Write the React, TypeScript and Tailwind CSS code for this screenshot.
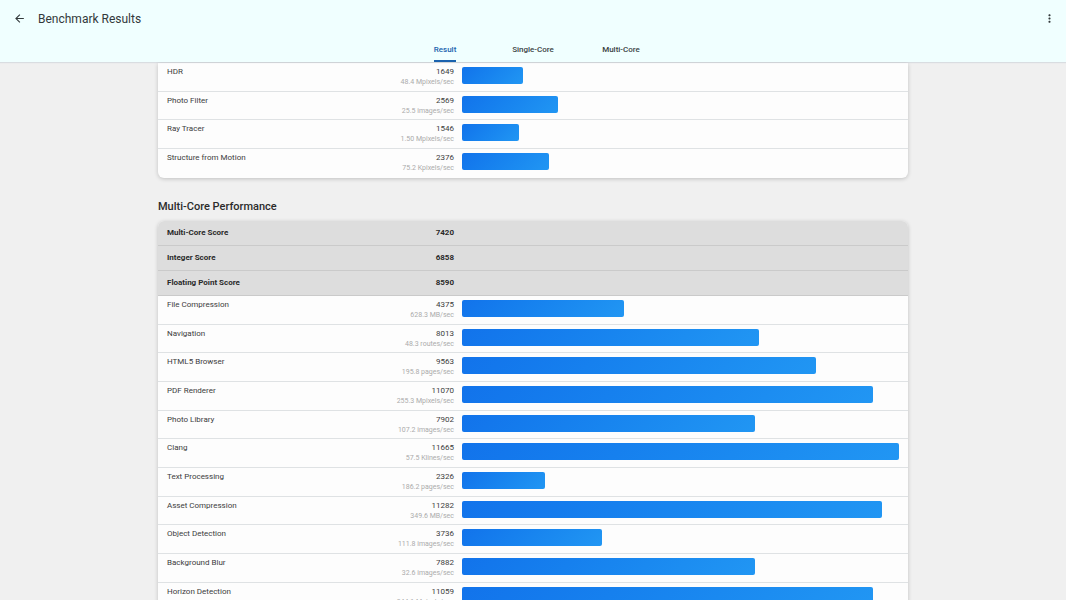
import clsx from 'clsx'
import { useState } from 'react'
import { MdArrowBack, MdMoreVert } from 'react-icons/md'

// ─── Types ────────────────────────────────────────────────────────────────────

interface Workload {
  name: string
  score: number
  rate: string
}

interface Summary {
  name: string
  score: number
}

// ─── Data ─────────────────────────────────────────────────────────────────────

const TABS = ['Result', 'Single-Core', 'Multi-Core']

const SINGLE_CORE: Workload[] = [
  { name: 'HDR', score: 1649, rate: '48.4 Mpixels/sec' },
  { name: 'Photo Filter', score: 2569, rate: '25.5 images/sec' },
  { name: 'Ray Tracer', score: 1546, rate: '1.50 Mpixels/sec' },
  { name: 'Structure from Motion', score: 2376, rate: '75.2 Kpixels/sec' },
]

const MULTI_CORE_SUMMARY: Summary[] = [
  { name: 'Multi-Core Score', score: 7420 },
  { name: 'Integer Score', score: 6858 },
  { name: 'Floating Point Score', score: 8590 },
]

const MULTI_CORE: Workload[] = [
  { name: 'File Compression', score: 4375, rate: '628.3 MB/sec' },
  { name: 'Navigation', score: 8013, rate: '48.3 routes/sec' },
  { name: 'HTML5 Browser', score: 9563, rate: '195.8 pages/sec' },
  { name: 'PDF Renderer', score: 11070, rate: '255.3 Mpixels/sec' },
  { name: 'Photo Library', score: 7902, rate: '107.2 images/sec' },
  { name: 'Clang', score: 11665, rate: '57.5 Klines/sec' },
  { name: 'Text Processing', score: 2326, rate: '186.2 pages/sec' },
  { name: 'Asset Compression', score: 11282, rate: '349.6 MB/sec' },
  { name: 'Object Detection', score: 3736, rate: '111.8 images/sec' },
  { name: 'Background Blur', score: 7882, rate: '32.6 images/sec' },
  { name: 'Horizon Detection', score: 11059, rate: '344.1 Mpixels/sec' },
]

// Both tables share one scale, so the bars can be compared across sections
const MAX_SCORE = Math.max(...[...SINGLE_CORE, ...MULTI_CORE].map((w) => w.score))

function barPercent(score: number): number {
  return Math.floor((score / MAX_SCORE) * 100)
}

// ─── Score table ──────────────────────────────────────────────────────────────

function ScoreTable({
  label,
  summary = [],
  workloads,
  className,
}: {
  label: string
  summary?: Summary[]
  workloads: Workload[]
  className?: string
}) {
  return (
    <div className={clsx('overflow-hidden bg-[#fdfdfd] shadow-[0_1px_4px_rgba(0,0,0,0.2)]', className)}>
      <table
        aria-label={label}
        className="w-full table-fixed border-separate border-spacing-0 text-[8px] leading-[10px] text-[#3c3c3c]"
      >
        <colgroup>
          <col className="w-1/4" />
          <col className="w-[15%]" />
          <col />
        </colgroup>
        {summary.length > 0 && (
          <tbody className="bg-[#dddddd] font-bold text-[#2a2a2a]">
            {summary.map((row) => (
              <tr key={row.name} className="h-[25px] *:border-b *:border-[#cacaca]">
                <th scope="row" className="pl-[9px] text-left">
                  {row.name}
                </th>
                <td className="pr-1 text-right">{row.score}</td>
                <td />
              </tr>
            ))}
          </tbody>
        )}
        <tbody>
          {workloads.map((row) => (
            <tr
              key={row.name}
              className="h-[29px] align-top *:border-b *:border-[#dfe2e4] last:*:border-transparent nth-[3n+2]:h-7"
            >
              <th scope="row" className="pt-1 pl-[9px] text-left font-normal">
                {row.name}
              </th>
              <td className="pt-1 pr-1 text-right whitespace-nowrap">
                {row.score}
                <div className="text-[7px] text-[#ababab]">{row.rate}</div>
              </td>
              <td className="pt-1 pr-[9px] pl-1">
                <div
                  className="h-[17px] rounded-xs bg-linear-135 from-[#1273eb] to-[#2196f3]"
                  style={{ width: `${barPercent(row.score)}%` }}
                />
              </td>
            </tr>
          ))}
        </tbody>
      </table>
    </div>
  )
}

// ─── Page ─────────────────────────────────────────────────────────────────────

export default function App() {
  const [active, setActive] = useState('Result')

  return (
    <div className="flex h-screen flex-col bg-[#f0f0f0] font-[Roboto,sans-serif]">
      <header className="relative shrink-0 bg-[#f0ffff] shadow-[0_1px_1px_rgba(60,90,120,0.12)]">
        <div className="flex h-[37px] items-center px-2.5 text-[#33393b]">
          <button type="button" aria-label="Back" className="px-[3px]">
            <MdArrowBack size={13} />
          </button>
          <h1 className="flex-1 pl-[9px] text-[12px] leading-4">Benchmark Results</h1>
          <button type="button" aria-label="More options">
            <MdMoreVert size={13} />
          </button>
        </div>
        <nav className="flex h-[25px] justify-center" role="tablist">
          {TABS.map((tab) => (
            <button
              key={tab}
              type="button"
              role="tab"
              aria-selected={tab === active}
              onClick={() => setActive(tab)}
              className="flex w-22 justify-center text-[8px] font-medium"
            >
              <span
                className={clsx(
                  'flex h-full items-center border-b-2 pt-0.5',
                  tab === active
                    ? 'border-[#1a62ae] text-[#1a62ae]'
                    : 'border-transparent text-[#3a4244]',
                )}
              >
                {tab}
              </span>
            </button>
          ))}
        </nav>
      </header>

      <main className="flex-1 overflow-y-auto pt-px [scrollbar-width:none]">
        <div className="mx-auto max-w-[750px]">
          <ScoreTable label="Single-Core Performance" workloads={SINGLE_CORE} className="rounded-b-md" />
          <h2 className="mt-[21px] mb-1.5 text-[11px] leading-4 font-medium text-[#2b2b2b]">
            Multi-Core Performance
          </h2>
          <ScoreTable
            label="Multi-Core Performance"
            summary={MULTI_CORE_SUMMARY}
            workloads={MULTI_CORE}
            className="rounded-md"
          />
        </div>
      </main>
    </div>
  )
}
